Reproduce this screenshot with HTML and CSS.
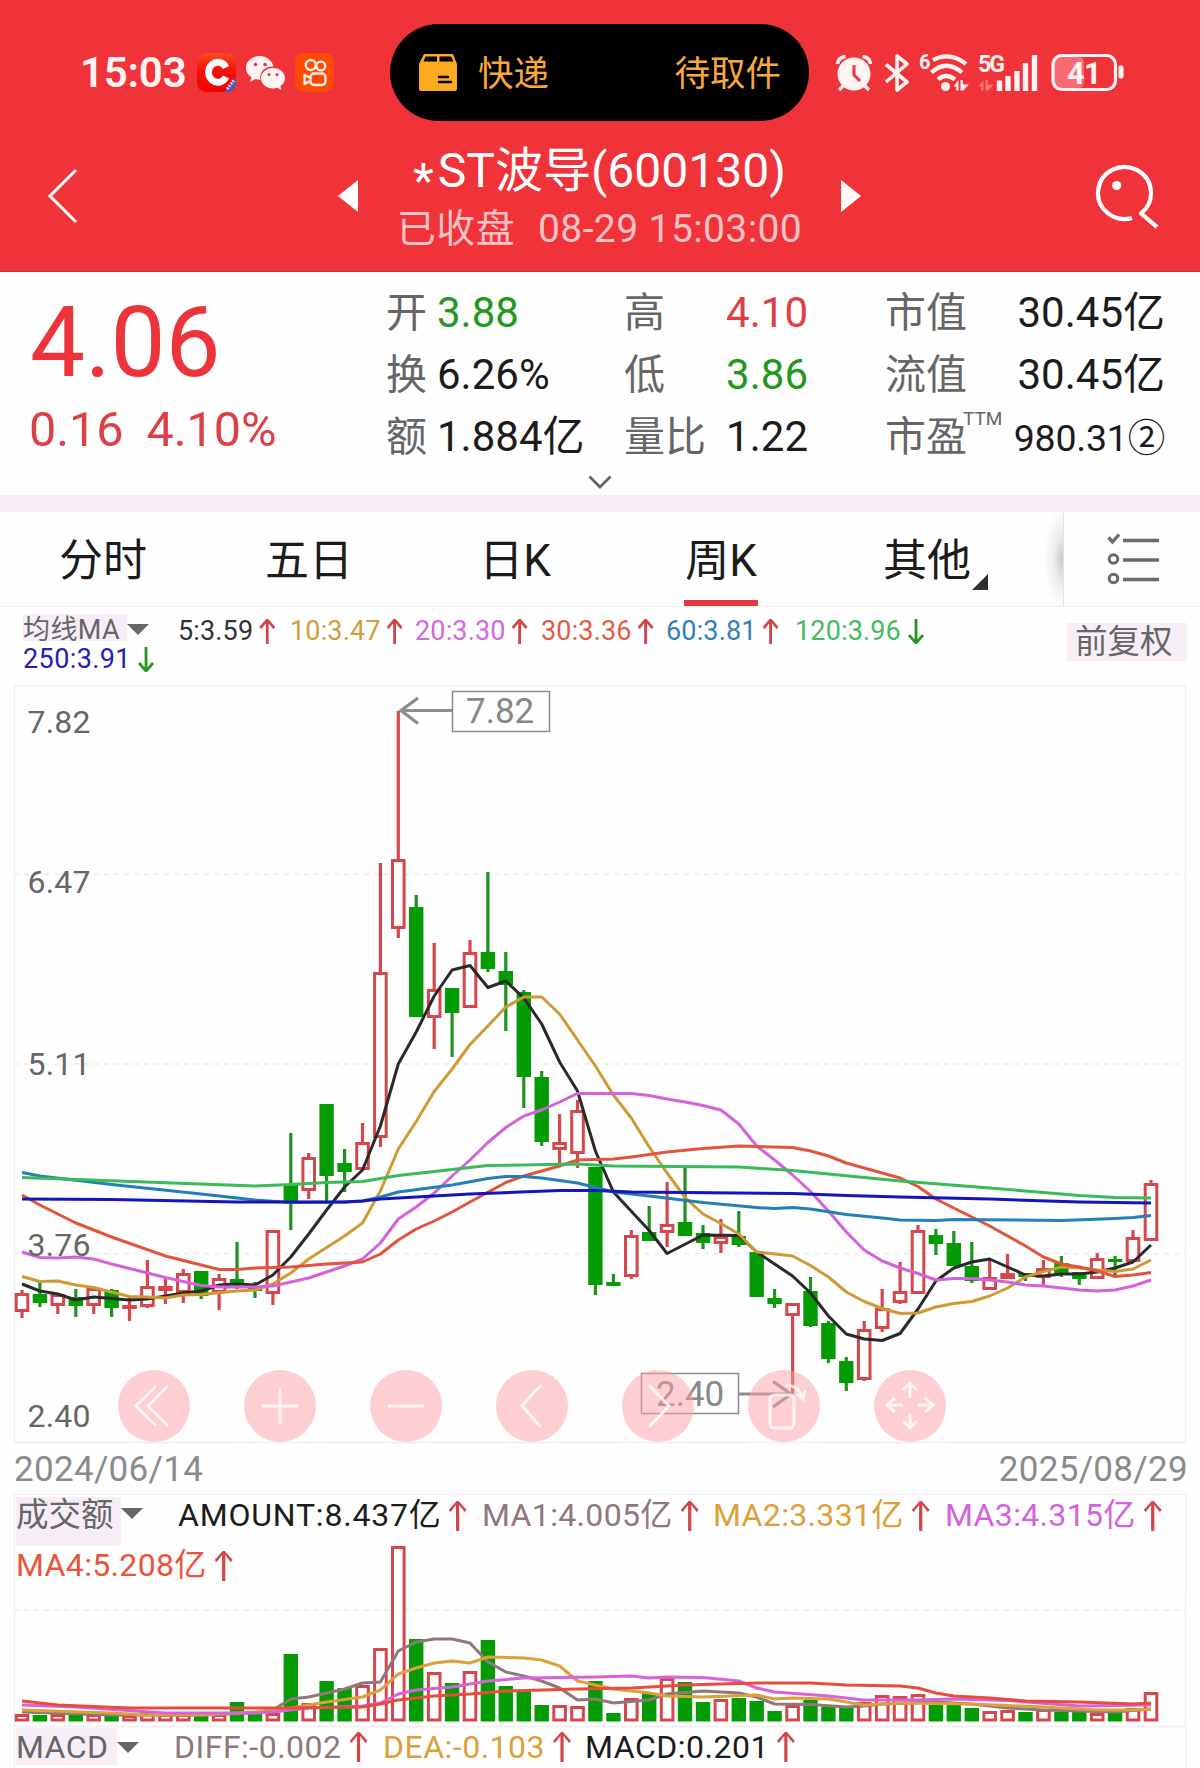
FILE: index.html
```html
<!DOCTYPE html>
<html lang="zh-CN">
<head>
<meta charset="utf-8">
<title>*ST波导(600130)</title>
<link rel="stylesheet" href="styles.css">
</head>
<body>
<header class="header">
  <div class="status">
    <div class="status-left">
      <span class="clock">15:03</span>
      <svg class="app" width="39" height="39" viewBox="0 0 39 39">
        <defs><linearGradient id="cg" x1="0" y1="0" x2="0" y2="1"><stop offset="0" stop-color="#fb4a20"/><stop offset=".45" stop-color="#f31208"/><stop offset="1" stop-color="#ee0204"/></linearGradient>
        <clipPath id="cc"><rect width="39" height="39" rx="9"/></clipPath></defs>
        <g clip-path="url(#cc)"><rect width="39" height="39" fill="url(#cg)"/><path d="M39 22V39H25Q36 36 39 22Z" fill="#3c62c8"/><path d="M30 36l7-9" stroke="#bcd0f5" stroke-width="3" stroke-dasharray="2 1"/></g>
        <path d="M29 14.500A9.300 10 0 1 0 29 24" fill="none" stroke="#fff" stroke-width="6.800"/>
      </svg>
      <svg class="app wechat" width="39" height="34" viewBox="0 0 39 34">
        <path d="M14 0C6 0 0 5.300 0 12c0 4 2 7.200 5.500 9.300L4 26l5.500-2.900c2 .5 3.500.7 5 .6C13 16 19 10 27.500 10.500 26 4.500 20.500 0 14 0Z" fill="#fff3f4"/>
        <path d="M27 12c-6.600 0-12 4.500-12 10.300S20.300 32.500 27 32.500c1.500 0 3-.3 4.300-.7L35.500 34l-1.200-3.800C37.300 28.300 39 25.500 39 22.300 39 16.500 33.600 12 27 12Z" fill="#fff3f4"/>
        <g fill="#ee3239"><circle cx="9.500" cy="8.500" r="1.800"/><circle cx="19" cy="8.500" r="1.800"/><circle cx="23" cy="18.500" r="1.500"/><circle cx="31" cy="18.500" r="1.500"/></g>
      </svg>
      <svg class="app" width="39" height="39" viewBox="0 0 39 39">
        <rect width="39" height="39" rx="9" fill="#ff4a06"/>
        <g fill="none" stroke="#fff1e4" stroke-width="2.400"><circle cx="15.800" cy="12" r="5"/><circle cx="25.800" cy="13" r="4.400"/><rect x="15.500" y="20.500" width="15" height="11.500" rx="3.500"/><path d="M15 24.500L9.500 22v9l5.500-3" stroke-linejoin="round"/></g>
      </svg>
    </div>
    <div class="island">
      <svg width="39" height="37" viewBox="0 0 39 37"><path d="M5 0H34L38 10V35Q38 37 36 37H2Q0 37 0 35V10Z" fill="#fcab20"/><path d="M6.500 2.500h11.500v5H4.500ZM20.500 2.500h11.500l2.500 5h-14Z" fill="#000"/><path d="M20 23h9M20 28h12" stroke="#000" stroke-width="2.400" stroke-linecap="round"/></svg>
      <span>快递</span><span class="island-state">待取件</span>
    </div>
    <div class="status-right">
      <svg width="290" height="60" viewBox="834 43 290 60">
        <circle cx="854" cy="74" r="16.500" fill="#fff3f4"/>
        <path d="M837.500 64Q838 57.500 845.500 56.500M870.500 64Q870 57.500 862.500 56.500M843 86l-4 4M865 86l4 4" fill="none" stroke="#fff3f4" stroke-width="3.500"/>
        <path d="M854 65v10l6 6" fill="none" stroke="#f03239" stroke-width="3"/>
        <path d="M886 64.500l21 17.500-10 8V56l10 8-21 18" fill="none" stroke="#fff3f4" stroke-width="3.600" stroke-linejoin="round"/>
        <text x="919" y="69" class="tiny">6</text>
        <g fill="none" stroke="#fff3f4" stroke-width="4.200"><path d="M933 60Q950 51 966 64"/><path d="M931.500 72.500Q946 59 962 72.500"/><path d="M938 79.500Q946 72.500 955 79.500"/></g>
        <circle cx="945.500" cy="86.500" r="4.500" fill="#fff3f4"/>
        <path d="M953.500 86.500l5-6.500v10.500h-2.300v-4zM960.500 80h2.400v4.500h6l-5.500 6h-2.900z" fill="#fff3f4"/>
        <text x="978" y="72" class="tiny g5">5G</text>
        <path d="M978.500 86.500l5-6.500v10.500h-2.300v-4zM985.500 80h2.400v4.500h6l-5.500 6h-2.900z" fill="#fb7478"/>
        <path d="M999.500 91V80.500M1008 91V76M1017 91V71M1025.500 91V63M1034.500 91V55" stroke="#fff3f4" stroke-width="5.400"/>
        <rect x="1054" y="56" width="30" height="33" rx="7" fill="#fa6a70"/>
        <rect x="1053" y="55.500" width="62.500" height="34" rx="9" fill="none" stroke="#fff3f4" stroke-width="3.200"/>
        <rect x="1118.500" y="65.500" width="5" height="13" rx="2" fill="#fff3f4"/>
        <text x="1067" y="84" class="battery">41</text>
      </svg>
    </div>
  </div>
  <div class="nav">
    <svg class="back" width="32" height="56" viewBox="0 0 32 56"><path d="M29 2L3 28L29 54" fill="none" stroke="#fff" stroke-width="3"/></svg>
    <div class="switcher">
      <svg width="20" height="32" viewBox="0 0 20 32"><path d="M20 0V32L0 16Z" fill="#fff"/></svg>
      <div class="titles">
        <h1 class="title"><span class="star">*</span>ST波导(600130)</h1>
        <p class="subtitle"><span>已收盘</span><span>08-29 15:03:00</span></p>
      </div>
      <svg width="20" height="32" viewBox="0 0 20 32"><path d="M0 0V32L20 16Z" fill="#fff"/></svg>
    </div>
    <svg class="search" width="68" height="68" viewBox="0 0 68 68"><path d="M39 55.900A26.500 26 0 1 1 48 51.300L64 65" fill="none" stroke="#fff" stroke-width="4.200" stroke-linejoin="round"/><circle cx="23.700" cy="23.500" r="4.600" fill="#fff"/></svg>
  </div>
</header>

<section class="quote">
  <div class="quote-main">
    <div class="price">4.06</div>
    <div class="change"><span>0.16</span><span>4.10%</span></div>
  </div>
  <div class="stats">
    <span class="k">开</span><span class="v green">3.88</span><span class="k">高</span><span class="v end red">4.10</span><span class="k third">市值</span><span class="v end">30.45亿</span>
    <span class="k">换</span><span class="v">6.26%</span><span class="k">低</span><span class="v end green">3.86</span><span class="k third">流值</span><span class="v end">30.45亿</span>
    <span class="k">额</span><span class="v">1.884亿</span><span class="k">量比</span><span class="v end">1.22</span><span class="k third">市盈<sup>TTM</sup></span><span class="v end small">980.31②</span>
  </div>
  <svg class="more" width="24" height="14" viewBox="0 0 24 14"><path d="M1.500 1.500L12 12L22.500 1.500" fill="none" stroke="#666" stroke-width="2.800"/></svg>
</section>

<nav class="tabs">
  <div class="tab"><span>分时</span></div>
  <div class="tab"><span>五日</span></div>
  <div class="tab"><span>日K</span></div>
  <div class="tab active"><span>周K</span></div>
  <div class="tab has-menu"><span>其他</span></div>
  <div class="tab-shadow"></div>
  <div class="tab-list">
    <svg width="54" height="52" viewBox="0 0 54 52"><g fill="none" stroke="#6a6a6a"><path d="M17 7.500H53M17 27H53M17 46.500H53" stroke-width="3.400"/><circle cx="7.500" cy="26" r="4.300" stroke-width="3"/><circle cx="7.500" cy="45.500" r="4.300" stroke-width="3"/><path d="M2.500 4.500l4 4.500L13 1.500" stroke-width="3.400"/></g></svg>
  </div>
</nav>

<section class="legend">
  <div class="legend-grid">
    <span class="picker"><b>均线MA</b></span>
    <span class="c5 up">5:3.59</span><span class="c10 up">10:3.47</span><span class="c20 up">20:3.30</span><span class="c30 up">30:3.36</span><span class="c60 up">60:3.81</span><span class="c120 down">120:3.96</span>
    <span class="c250 down">250:3.91</span>
  </div>
  <span class="adjust">前复权</span>
</section>

<section class="kline">
  <svg id="kline" width="1200" height="759" viewBox="0 685 1200 759"></svg>
  <div class="tools">
    <button><svg viewBox="-36 -36 72 72"><path d="M2-20L-18 0L2 20M14-20L-6 0L14 20"/></svg></button>
    <button><svg viewBox="-36 -36 72 72"><path d="M-18 0H18M0-18V18"/></svg></button>
    <button><svg viewBox="-36 -36 72 72"><path d="M-18 0H18"/></svg></button>
    <button><svg viewBox="-36 -36 72 72"><path d="M9-21L-10 0L9 21"/></svg></button>
    <button><svg viewBox="-36 -36 72 72"><path d="M-9-21L11 0L-9 21"/></svg></button>
    <button><svg viewBox="-36 -36 72 72"><rect x="-14" y="-11" width="24" height="33" rx="4"/><path d="M2-21Q15-20 19-8M13-12L19-7L21-16"/></svg></button>
    <button><svg viewBox="-36 -36 72 72"><path d="M0-8V-22M-7-16L0-23L7-16M0 7V21M-7 15L0 22L7 15M-7-1H-22M-15-8L-23-1L-15 6M8-1H22M15-8L23-1L15 6"/></svg></button>
  </div>
</section>

<div class="dates"><span>2024/06/14</span><span>2025/08/29</span></div>

<section class="volume">
  <div class="vlegend">
    <span class="picker"><b>成交额</b></span>
    <span class="up amount wide">AMOUNT:8.437亿</span><span class="up m1">MA1:4.005亿</span><span class="up m2">MA2:3.331亿</span><span class="up m3">MA3:4.315亿</span>
    <span class="up m4">MA4:5.208亿</span>
  </div>
  <svg id="volume" width="1200" height="138" viewBox="0 1588 1200 138"></svg>
</section>

<section class="macd">
  <span class="picker"><b>MACD</b></span>
  <span class="up m1">DIFF:-0.002</span><span class="up m2">DEA:-0.103</span><span class="up amount">MACD:0.201</span>
</section>
<script src="chart.js"></script>
</body>
</html>
```
FILE: styles.css
```css
* { box-sizing: border-box; }
body { margin: 0; width: 1200px; height: 1768px; overflow: hidden; background: #fefefe; color: #1b1c1b; font-family: Roboto, "Noto Sans CJK SC", sans-serif; }
h1, p { margin: 0; font-weight: 400; }
svg { display: block; flex: none; }
b { font-weight: 400; }

.header { height: 272px; background: #f03239; border-bottom: 1px solid #ce3236; color: #fff; }
.status { display: grid; grid-template-columns: 390px 419px 1fr; height: 145px; align-items: center; }
.status-left { display: flex; align-items: center; padding-left: 80px; }
.clock { width: 117px; padding-top: 1px; font-size: 42px; font-weight: 600; color: #fff3f4; line-height: 50px; letter-spacing: -.2px; }
.wechat { margin: 0 10px; }
.island { display: flex; align-items: center; height: 97px; padding: 0 28px 0 29px; border-radius: 49px; background: #000; color: #f6a83c; font-size: 35.500px; }
.island span { margin-left: 20px; padding-top: 3px; white-space: nowrap; line-height: 44px; }
.island .island-state { margin-left: auto; }
.status-right { padding-left: 25px; }
.tiny { font: 700 20px Roboto, sans-serif; fill: #fff3f4; }
.g5 { font-size: 23px; letter-spacing: -2px; }
.battery { font: 700 31px Roboto, sans-serif; fill: #fff3f4; letter-spacing: -1px; }
.nav { display: flex; align-items: center; height: 126px; padding: 0 39px 0 47px; }
.back { margin-top: -24px; }
.switcher { display: flex; align-items: center; justify-content: space-between; width: 523px; margin-left: 259px; }
.switcher > svg { margin-top: -24px; }
.titles { display: flex; flex-direction: column; align-items: center; margin: -14px -40px 0; }
.title { font-size: 48px; line-height: 56px; white-space: nowrap; }
.star { vertical-align: -10px; line-height: 0; margin-right: 4px; }
.subtitle { display: flex; gap: 23px; font-size: 39px; line-height: 60px; color: #fdc2c6; white-space: nowrap; letter-spacing: .4px; }
.search { margin: -24px 0 0 auto; }

.quote { position: relative; display: flex; height: 223px; }
.quote-main { width: 386px; padding: 21px 0 0 29px; color: #ee343b; }
.price { font-size: 98px; line-height: 100px; letter-spacing: -.2px; text-indent: 1px; }
.change { display: flex; gap: 23px; margin-top: 12px; font-size: 48.500px; line-height: 50px; color: #dc4046; }
.stats { display: grid; grid-template-columns: 51px 187px 89px 95px 199px 158px; grid-auto-rows: 62px; padding-top: 10px; line-height: 62px; font-size: 42px; white-space: nowrap; }
.k { font-size: 41px; color: #666; }
.third { padding-left: 77px; }
.k sup { margin-left: -4px; font-size: 19px; line-height: 0; vertical-align: 26px; }
.end { text-align: right; }
.small { padding-top: 1px; font-size: 37.500px; letter-spacing: -.2px; }
.green { color: #24971c; }
.red { color: #dc4046; }
.more { position: absolute; left: 588px; bottom: 6px; }

.tabs { display: flex; height: 112px; border-top: 17px solid #f7edf7; border-bottom: 1px solid #ededed; }
.tab { flex: 0 0 206px; display: flex; justify-content: center; font-size: 44px; line-height: 98px; }
.tab span { position: relative; }
.active span::after { content: ""; position: absolute; left: -1px; right: -1px; top: 88px; height: 6px; background: #e8373c; }
.has-menu span::after { content: ""; position: absolute; right: -17px; top: 62px; border-left: 16px solid transparent; border-bottom: 16px solid #303030; }
.tab-shadow { width: 33px; background: radial-gradient(ellipse 19px 52px at 100% 50%, #c9c7c9, rgba(225, 222, 225, .5) 50%, rgba(255, 255, 255, 0)); }
.tab-list { flex: 1; display: flex; align-items: center; padding-left: 42px; border-left: 1px solid #e2e2e2; }

.legend { display: flex; justify-content: space-between; height: 78px; padding: 7px 13px 0 23px; font-size: 27px; white-space: nowrap; }
.legend-grid { display: grid; grid-template-columns: 155px 112px 125px 126px 125px 129px 140px; grid-template-rows: 30px 30px; line-height: 34px; letter-spacing: .15px; }
.picker { display: flex; align-items: center; color: #666; }
.picker b { background: #f7edf7; }
.picker::after { content: ""; border: 11px solid transparent; border-top-color: #666; border-bottom: 0; }
.legend .picker { align-items: flex-start; }
.legend .picker b { width: 104px; height: 27px; line-height: 33px; letter-spacing: .4px; }
.legend .picker::after { margin-top: 10px; }
.up, .down { display: flex; align-items: flex-start; }
.up::after, .down::after { content: ""; width: 17px; height: 25px; margin: 5px 0 0 6px; background: #d04548; clip-path: polygon(7px 0, 9px 0, 16px 8px, 14px 10px, 9.400px 4.500px, 9.400px 100%, 6.600px 100%, 6.600px 4.500px, 2px 10px, 0 8px); }
.down::after { background: #24971c; transform: rotate(180deg); }
.c5 { color: #333; }
.c10 { color: #cf9f3b; }
.c20 { color: #d468dc; }
.c30 { color: #e05d48; }
.c60 { color: #3480b5; }
.c120 { color: #44bb63; }
.c250 { color: #2421b5; letter-spacing: .4px; margin-top: -2px; }
.adjust { width: 120px; height: 38px; margin-top: 9px; padding-left: 8px; background: #f7edf7; color: #666; font-size: 32.500px; line-height: 38px; }

.kline { position: relative; height: 759px; }
.axis { font: 32px Roboto, sans-serif; fill: #666; letter-spacing: .2px; }
.mark { font: 35px Roboto, sans-serif; fill: #888; }
.tools { position: absolute; left: 118px; bottom: 2px; display: flex; gap: 54px; }
.tools button { width: 72px; height: 72px; padding: 0; border: 0; border-radius: 50%; background: rgba(252, 160, 168, .5); }
.tools path, .tools rect { fill: none; stroke: #fff; stroke-opacity: .75; stroke-width: 3; }

.dates { display: flex; justify-content: space-between; height: 50px; padding: 0 12px 0 14px; color: #8b8b8b; font-size: 35px; line-height: 52px; letter-spacing: .3px; }

.volume { height: 234px; font-size: 32px; }
.vlegend { display: grid; grid-template-columns: 162px 304px 231px 232px 240px; grid-template-rows: 50px 42px; height: 94px; margin: 0 13px 0 14px; padding: 2px 0 0 1px; border: 1px solid #f0edf0; border-bottom: 0; line-height: 36px; letter-spacing: .35px; white-space: nowrap; }
.vlegend .m4 { grid-column: 1 / 3; }
.vlegend .wide { letter-spacing: .8px; }
.volume .up::after, .macd .up::after { width: 19px; height: 30px; margin: 4px 0 0 8px; background: #d4444a; clip-path: polygon(8px 0, 10px 0, 18px 9px, 16px 11px, 10.600px 4px, 10.600px 100%, 7.400px 100%, 7.400px 4px, 2px 11px, 0 9px); }
.vlegend .amount::after { margin-left: 7px; }
.volume .picker { align-items: flex-start; }
.volume .picker b { width: 105px; height: 49px; line-height: 36px; font-size: 32.500px; letter-spacing: 0; }
.volume .picker::after { margin-top: 11px; }
.amount { color: #1b1c1b; }
.m1 { color: #8f787a; }
.m2 { color: #dda03a; }
.m3 { color: #d562dc; }
.m4 { color: #e8553c; }
#volume { overflow: visible; }

.macd { display: grid; grid-template-columns: 158px 209px 202px 1fr; height: 40px; margin: 0 13px 0 14px; padding-left: 1px; border: 1px solid #f0edf0; border-top: 0; border-bottom: 0; font-size: 32px; line-height: 39px; letter-spacing: .5px; white-space: nowrap; }
.macd .picker { align-items: flex-start; }
.macd .picker b { width: 101px; height: 37px; line-height: 38px; letter-spacing: .4px; }
.macd .picker::after { margin-top: 14px; }
```
FILE: chart.js
```js
const STEP = 17.92, X0 = 22;
const x = i => +(X0 + i * STEP).toFixed(1);
const RED = "#d4474c", GREEN = "#049c04";

// direction, body top, body bottom, wick top, wick bottom
const candles = [
["r",1293,1312,1290,1318],["g",1294,1303,1282,1307],["r",1294,1306,1294,1314],["g",1297,1306,1289,1317],
["r",1288,1306,1286,1314],["g",1290,1308,1289,1317],["r",1305,1309,1297,1321],["r",1286,1307,1260,1308],
["r",1286,1291,1279,1304],["r",1273,1293,1269,1303],["g",1271,1296,1271,1299],["r",1278,1293,1274,1310],
["g",1279,1284,1242,1289],["g",1287,1291,1282,1298],["r",1230,1294,1230,1305],["g",1185,1201,1133,1230],
["r",1157,1191,1153,1199],["g",1104,1176,1104,1201],["g",1163,1172,1149,1192],["r",1142,1170,1123,1170],
["r",972,1138,863,1147],["r",859,929,711,938],["g",907,1017,895,1017],["r",989,1018,943,1049],
["g",988,1013,988,1057],["r",952,1008,940,1008],["g",952,969,872,972],["g",971,985,952,1031],
["g",992,1077,990,1108],["g",1077,1142,1071,1146],["r",1142,1150,1114,1163],["r",1110,1154,1100,1168],
["g",1167,1285,1167,1295],["g",1282,1286,1274,1286],["r",1235,1277,1230,1279],["g",1232,1241,1206,1241],
["r",1224,1233,1182,1247],["g",1222,1236,1168,1236],["g",1233,1243,1225,1249],["r",1236,1244,1219,1253],
["g",1236,1245,1211,1247],["g",1252,1297,1252,1297],["g",1298,1304,1289,1308],["r",1303,1316,1303,1394],
["g",1291,1326,1277,1327],["g",1323,1359,1321,1363],["g",1361,1383,1357,1391],["r",1329,1380,1321,1381],
["r",1308,1329,1289,1332],["r",1291,1303,1262,1304],["r",1230,1294,1225,1294],["g",1235,1244,1229,1255],
["g",1243,1266,1231,1266],["g",1266,1281,1242,1283],["r",1277,1290,1260,1290],["r",1273,1279,1254,1279],
["g",1273,1277,1273,1281],["r",1268,1278,1260,1286],["g",1263,1275,1256,1277],["g",1272,1279,1272,1285],
["r",1258,1279,1253,1279],["g",1259,1262,1256,1277],["r",1237,1262,1230,1262],["r",1183,1241,1180,1241]];

const volumeTops = [1714,1715,1714,1715,1714,1715,1715,1712,1714,1714,1715,1714,1702,1714,1713,1654,1703,1681,1688,1685,1648,1546,1639,1672,1683,1671,1640,1686,1692,1705,1705,1706,1681,1713,1698,1693,1678,1682,1702,1699,1698,1701,1711,1705,1700,1707,1708,1702,1695,1696,1694,1705,1705,1708,1711,1710,1712,1709,1712,1712,1713,1712,1708,1692];

// "index:y" pairs for every averaging line
const priceLines = [
["#2a2a2a","0:1284 1:1291 2:1294 3:1300 4:1297 6:1300 7:1299 8:1296 9:1293 10:1291 11:1285 12:1284 13:1285 14:1275 15:1257 16:1234 17:1210 18:1187 19:1170 20:1126 21:1064 22:1032 23:996 24:970 25:965.5 26:987.5 27:981 28:998 29:1024 30:1062 31:1091 32:1151 33:1192 35:1230.5 36:1253.5 38:1235 40:1235.5 41:1252 42:1264 43:1276 44:1293 45:1316 46:1334 47:1339 48:1340.5 49:1333.5 50:1309 51:1281 52:1268 53:1262 54:1259 55:1267 56:1275 57:1276 58:1274 59:1274 60:1272 61:1268 62:1262 63:1245"],
["#cf9a35","0:1276.5 1:1281.5 2:1281 3:1285 4:1287.5 5:1292 6:1296.5 7:1297 8:1298 9:1295 10:1294.5 12:1291 13:1290 14:1284 15:1273 16:1259 17:1247.5 18:1236 19:1223 20:1191 21:1149 22:1121.5 23:1091.5 24:1069 25:1044.5 26:1026 27:1007 28:997 29:997 30:1014 31:1040 32:1066 33:1095 34:1118 35:1147 36:1173 37:1197.5 38:1214 39:1223.5 40:1234 41:1252 43:1256 44:1265.5 45:1277 46:1292 47:1301.5 48:1308.5 49:1313.5 50:1313 51:1307 52:1303.5 53:1301.5 54:1296 55:1288 56:1277 57:1271.5 58:1267 59:1268 60:1270 61:1271.5 62:1269 63:1260"],
["#d462da","0:1252 1:1257.5 2:1258 3:1257 4:1259 5:1264 6:1268.5 7:1273 8:1277.5 9:1281.5 10:1285.5 11:1287 13:1287 14:1286 15:1282 16:1278 17:1272 18:1266 19:1259 20:1243 21:1219 22:1207 23:1193 24:1176 25:1160 26:1142.5 27:1127.5 28:1116 29:1110 30:1102 31:1093.5 34:1093.5 35:1095.5 36:1099 37:1102 38:1105.5 39:1110 40:1124 41:1146 42:1160 43:1175 44:1191.5 45:1211 46:1232 47:1250 48:1261 49:1268 50:1273.5 51:1280 52:1278.5 53:1278.5 54:1280 55:1282 56:1285 57:1286 58:1288 59:1290 60:1291 61:1290 62:1286 63:1280"],
["#e2543c","0:1195 1:1205 3:1223 5:1237 8:1256 10:1265 11:1269.5 12:1269.5 13:1268 15:1267 17:1264 19:1262 20:1254 21:1240 22:1229 23:1221 24:1212 25:1202 27:1182.5 28:1176 29:1171 30:1166 31:1160 33:1159 34:1157 36:1152 38:1148.5 40:1146 43:1147.5 44:1151 45:1156 46:1163 47:1168 49:1178 50:1186.5 51:1199 52:1208 54:1226 56:1246 57:1257 58:1264 59:1267 60:1271 61:1276.5 62:1275 63:1272.5"],
["#2480b4","0:1172.5 1:1176 5:1184.5 10:1194 13:1200 15:1202.5 18:1202 19:1201 20:1197 21:1192 24:1185 26:1178.5 27:1176.5 28:1176.5 29:1178 31:1183 33:1192 35:1196 38:1202.5 41:1207.5 42:1208.5 43:1207.5 44:1209 46:1214.5 48:1218 49:1220 51:1220.5 52:1219.5 58:1220.5 61:1218.5 62:1217.5 63:1215.5"],
["#3aba58","0:1177.5 13:1186 15:1184.5 17:1182.5 19:1181.5 21:1175.5 23:1171.5 26:1165.5 31:1164 33:1166 40:1167 43:1170.5 49:1181 54:1188 59:1195.5 61:1197.5 63:1198"],
["#1614bc","0:1199 5:1199.5 12:1202 18:1202 19:1201 20:1199 21:1198 25:1194 30:1190.5 32:1190.5 34:1192 43:1193.5 46:1195.5 49:1197 54:1199 59:1202 63:1203"]];

const volumeLines = [
["#8f787a","0:1712 5:1715 10:1715 13:1713 14:1710 15:1699 16:1697 17:1693 18:1689 19:1683 20:1682 21:1651 22:1642 23:1639 24:1639 25:1643 26:1662 27:1672 28:1676 29:1681 30:1688 31:1700 32:1699 33:1703 35:1700 36:1694 38:1691 40:1693 41:1697 42:1704 44:1704.5 46:1707 47:1706 48:1704 51:1702 53:1704 55:1708 57:1710 61:1712 63:1709"],
["#dda03a","0:1710 5:1713 7:1715 10:1715 13:1712 15:1708 17:1702 19:1697 20:1690 21:1674 22:1668 23:1663 24:1661 25:1663 26:1657 28:1658 29:1660 30:1666 31:1681 32:1685 33:1689 35:1693 36:1696 38:1697 41:1695 42:1699 43:1698 45:1699 47:1705 49:1703 53:1704 57:1707 60:1710 62:1710 63:1709"],
["#d962da","0:1705 3:1707 8:1713 13:1713 14:1712 16:1708 19:1706 20:1703 21:1694 22:1690 24:1687 25:1684 26:1681 28:1678 32:1677 34:1676 35:1678 36:1677 38:1677.5 40:1681 41:1688 42:1692 45:1696 47:1700 50:1700 52:1699 55:1700.5 59:1706 63:1705"],
["#e84c3c","0:1701 2:1705 6:1708 15:1708 19:1707 20:1704 21:1700 23:1696 25:1694 27:1691 31:1689 34:1688 37:1685 39:1684 41:1683 44:1683 46:1685 49:1686 50:1688 51:1693 52:1696 54:1698 56:1701 59:1702 62:1704 63:1703"]];

function box(i, dir, top, bottom) {
  const c = x(i);
  if (dir === "g") return `<rect x="${c - 7.2}" y="${top}" width="14.400" height="${bottom - top}" fill="${GREEN}"/>`;
  const h = Math.max(bottom - top - 3, .5);
  return `<rect x="${c - 5.8}" y="${top + 1.5}" width="11.600" height="${h}" fill="#fff" stroke="${RED}" stroke-width="3"/>`;
}
const line = ([color, data]) =>
  `<polyline fill="none" stroke="${color}" stroke-width="3" stroke-linejoin="round" points="${data.split(" ").map(p => { const [i, y] = p.split(":"); return x(+i) + "," + y; }).join(" ")}"/>`;
const dashed = y => `<path d="M14 ${y}H1186" stroke="#ececec" stroke-width="1.500" stroke-dasharray="5 5"/>`;

let k = `<rect x="14.500" y="685.500" width="1171" height="757" fill="none" stroke="#efedef" stroke-width="1.500"/>`;
k += [874.5, 1064, 1253.5].map(dashed).join("");
candles.forEach(([d, t, b, wt, wb], i) => {
  k += `<path d="M${x(i)} ${wt}V${wb}" stroke="${d === "r" ? RED : "#1e921e"}" stroke-width="3.200"/>` + box(i, d, t, b);
});
k += priceLines.map(line).join("");
k += [["7.82", 733], ["6.47", 893], ["5.11", 1075], ["3.76", 1256], ["2.40", 1427]]
  .map(([t, y]) => `<text class="axis" x="27.500" y="${y}">${t}</text>`).join("");
k += `<g fill="none" stroke="#8c8c8c"><path stroke-width="1.500" d="M452.500 691.500H549.500V731.500H452.500ZM641.500 1373.500H738.500V1413.500H641.500Z"/><path stroke-width="3.200" d="M452 710.500H401M418 698L401 710.500L418 723.500M739 1394H791M773 1381.500L791 1394L773 1407"/></g>`;
k += `<text class="mark" x="466" y="723">7.82</text><text class="mark" x="656" y="1406">2.40</text>`;
document.getElementById("kline").innerHTML = k;

let v = `<path d="M14.500 1588V1726M1185.500 1588V1726" stroke="#f0edf0"/>` + dashed(1610);
volumeTops.forEach((t, i) => { v += box(i, candles[i][0], t, 1721.5); });
v += volumeLines.map(line).join("") + `<path d="M14 1726.500H1186" stroke="#f3eff3" stroke-width="2"/>`;
document.getElementById("volume").innerHTML = v;
```
